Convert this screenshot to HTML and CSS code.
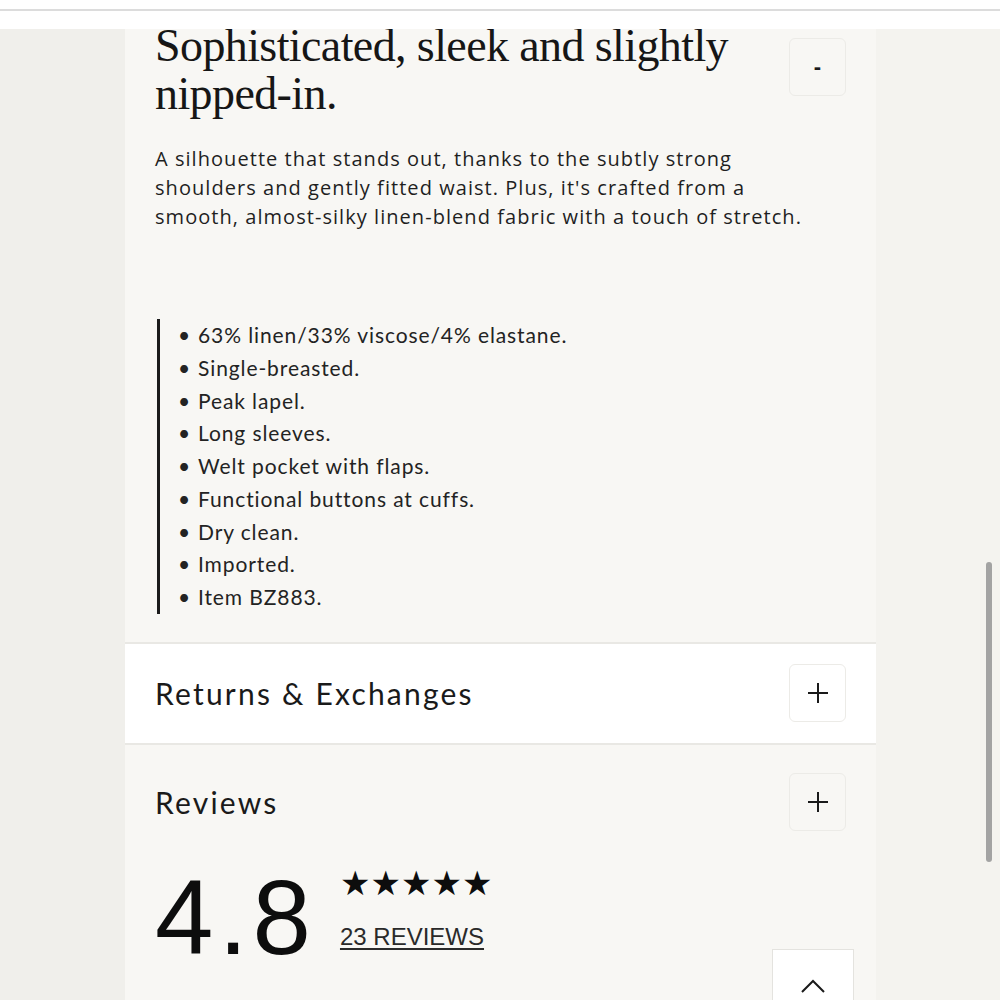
FILE: index.html
```html
<!DOCTYPE html>
<html lang="en">
<head>
<meta charset="utf-8">
<title>Product details</title>
<link rel="stylesheet" href="styles.css">
</head>
<body>
<div class="topbar"><div class="topline"></div></div>
<div class="page">
  <div class="gutter gutter-left"></div>
  <main class="panel">
    <section class="details">
      <div class="details-head">
        <h1 class="headline">Sophisticated, sleek and slightly nipped-in.</h1>
        <button class="toggle toggle-minus" aria-label="Collapse">-</button>
      </div>
      <p class="blurb">A silhouette that stands out, thanks to the subtly strong shoulders and gently fitted waist. Plus, it's crafted from a smooth, almost-silky linen-blend fabric with a touch of stretch.</p>
      <ul class="specs">
        <li>63% linen/33% viscose/4% elastane.</li>
        <li>Single-breasted.</li>
        <li>Peak lapel.</li>
        <li>Long sleeves.</li>
        <li>Welt pocket with flaps.</li>
        <li>Functional buttons at cuffs.</li>
        <li>Dry clean.</li>
        <li>Imported.</li>
        <li>Item BZ883.</li>
      </ul>
    </section>
    <section class="accordion accordion-returns">
      <h2 class="accordion-title">Returns &amp; Exchanges</h2>
      <button class="toggle" aria-label="Expand">
        <svg width="22" height="22" viewBox="0 0 22 22"><path d="M11 1v20M1 11h20" stroke="#1a1a1a" stroke-width="2" fill="none"/></svg>
      </button>
    </section>
    <section class="accordion accordion-reviews">
      <h2 class="accordion-title">Reviews</h2>
      <button class="toggle" aria-label="Expand">
        <svg width="22" height="22" viewBox="0 0 22 22"><path d="M11 1v20M1 11h20" stroke="#1a1a1a" stroke-width="2" fill="none"/></svg>
      </button>
    </section>
    <section class="rating">
      <div class="score">4.8</div>
      <div class="rating-meta">
        <div class="stars">★★★★★</div>
        <a class="count" href="#">23 REVIEWS</a>
      </div>
    </section>
    <div class="backtop-row">
      <button class="backtop" aria-label="Back to top">
        <svg width="26" height="16" viewBox="0 0 26 16"><path d="M2 14L13 3l11 11" stroke="#1a1a1a" stroke-width="2" fill="none"/></svg>
      </button>
    </div>
  </main>
  <div class="gutter gutter-right"><div class="scrollbar"></div></div>
</div>
</body>
</html>
```

FILE: styles.css
```css
html, body {
  margin: 0;
  padding: 0;
  height: 1000px;
  overflow: hidden;
}
body {
  background: #f2f1ed;
  font-family: "Lato", "Open Sans", sans-serif;
  color: #1b1b1b;
}
.topbar {
  position: fixed;
  top: 0;
  left: 0;
  right: 0;
  z-index: 5;
  height: 29px;
  background: #ffffff;
  padding-top: 9px;
  box-sizing: border-box;
}
.topline {
  height: 2px;
  background: #dcdcdc;
}
.page {
  display: flex;
  height: 1000px;
}
.gutter {
  background: #f0efeb;
}
.gutter-left {
  width: 125px;
  flex: none;
}
.gutter-right {
  flex: 1;
  position: relative;
  background: #f4f3ef;
}
.scrollbar {
  position: absolute;
  left: 110px;
  top: 562px;
  width: 6px;
  height: 300px;
  border-radius: 3px;
  background: #a3a3a3;
}
.panel {
  width: 751px;
  flex: none;
  background: #f8f7f4;
  overflow: hidden;
}
.details {
  padding: 22px 30px 0 30px;
}
.details-head {
  display: flex;
  justify-content: space-between;
  align-items: flex-start;
}
.headline {
  margin: 0;
  font-family: "Liberation Serif", "Times New Roman", serif;
  font-weight: 400;
  font-size: 46px;
  line-height: 48px;
  letter-spacing: -0.6px;
  color: #161616;
  width: 600px;
}
.toggle {
  width: 57px;
  height: 58px;
  flex: none;
  border: 1px solid #ecebe7;
  border-radius: 6px;
  background: transparent;
  display: flex;
  align-items: center;
  justify-content: center;
  padding: 0;
  font-family: "Liberation Sans", sans-serif;
  font-size: 22px;
  color: #1a1a1a;
}
.toggle-minus {
  margin-top: 16px;
  font-weight: 700;
}
.blurb {
  margin: 26px 0 0 0;
  font-family: "Open Sans", sans-serif;
  font-weight: 500;
  font-size: 20px;
  line-height: 29px;
  letter-spacing: 1.05px;
  color: #1f1f1f;
  width: 665px;
}
.specs {
  margin: 88px 0 0 2px;
  padding: 0 0 0 18px;
  border-left: 3px solid #1b1b1b;
  list-style: none;
  font-family: "Lato", sans-serif;
  font-size: 21px;
  line-height: 32.75px;
  letter-spacing: 0.9px;
  color: #232323;
}
.specs li::before {
  content: "•";
  display: inline-block;
  width: 20px;
}
.accordion {
  display: flex;
  align-items: center;
  justify-content: space-between;
  padding: 0 30px;
  height: 103px;
  box-sizing: border-box;
}
.accordion-returns {
  margin-top: 28px;
  background: #ffffff;
  border-top: 2px solid #e9e8e4;
  border-bottom: 2px solid #e9e8e4;
}
.accordion-reviews {
  height: 114px;
}
.accordion-title {
  margin: 0;
  font-family: "Lato", sans-serif;
  font-weight: 400;
  font-size: 30px;
  letter-spacing: 2.2px;
  color: #1a1a1a;
}
.rating {
  display: flex;
  align-items: flex-start;
  padding: 0 30px;
  margin-top: 7px;
  gap: 24px;
}
.score {
  font-family: "Liberation Sans", Arial, sans-serif;
  font-size: 105px;
  line-height: 104px;
  letter-spacing: 5px;
  color: #0d0d0d;
}
.rating-meta {
  display: flex;
  flex-direction: column;
  gap: 22px;
  margin-top: -1px;
}
.stars {
  font-family: "DejaVu Sans", sans-serif;
  font-size: 34px;
  line-height: 36px;
  color: #0d0d0d;
}
.count {
  font-family: "Liberation Sans", sans-serif;
  font-size: 24px;
  line-height: 28px;
  color: #2a2a2a;
  text-decoration: underline;
  text-underline-offset: 3px;
}
.backtop-row {
  display: flex;
  justify-content: flex-end;
  padding-right: 22px;
  margin-top: -21px;
}
.backtop {
  width: 82px;
  height: 70px;
  background: #ffffff;
  border: 1px solid #e4e3df;
  display: flex;
  justify-content: center;
  padding-top: 28px;
}
```
